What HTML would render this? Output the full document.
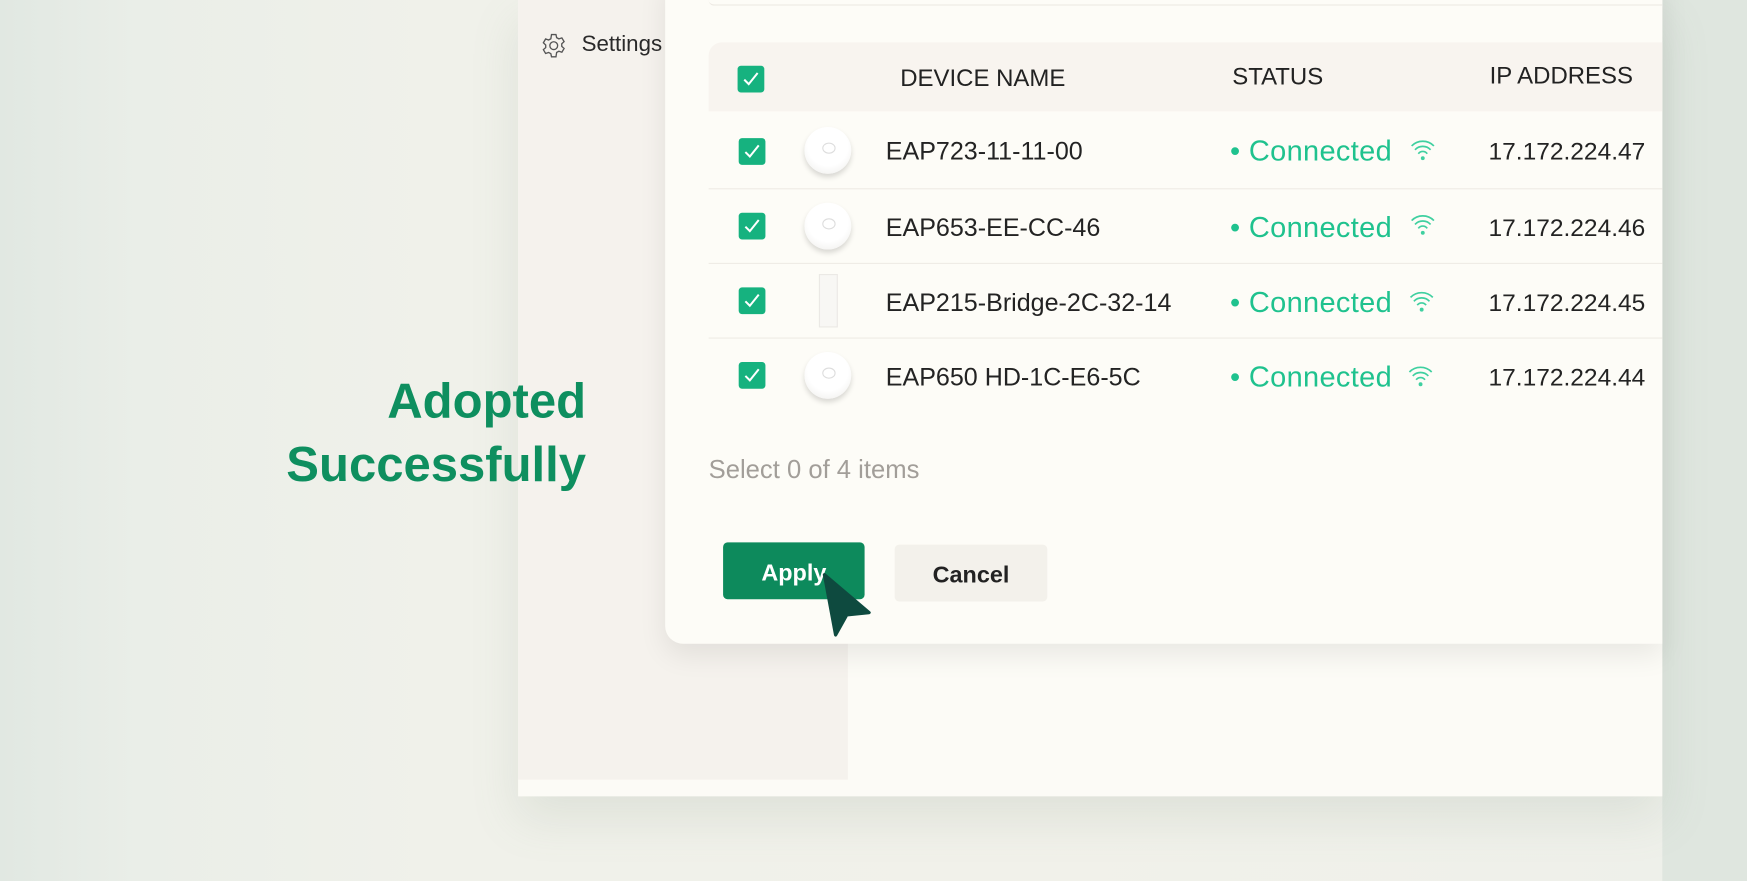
<!DOCTYPE html>
<html><head><meta charset="utf-8"><style>
*{margin:0;padding:0;box-sizing:border-box}
html,body{width:1747px;height:881px;overflow:hidden;background:#e6ebe5}
#s{position:absolute;left:0;top:0;width:1568px;height:791px;transform:scale(1.11416,1.1138);transform-origin:0 0;font-family:"Liberation Sans",sans-serif;
background:linear-gradient(90deg,#e1e8e2 0%,#eaeee8 8%,#f0f1ea 25%,#f1f1ea 60%,#eef0ea 100%);overflow:hidden}
.a{position:absolute}
.cb{position:absolute;width:24px;height:24px;border-radius:3px;background:#16b27f}
.cb svg{position:absolute;left:4px;top:4px}
.row{position:absolute;left:636px;width:856px;height:67px;border-top:1px solid #efebe5}
.ic{position:absolute;left:722px;width:42px;height:42px;border-radius:50%;background:radial-gradient(circle at 50% 40%,#ffffff 55%,#ecebe8 100%);box-shadow:0 3px 5px rgba(0,0,0,.15)}
.ic:after{content:"";position:absolute;left:16px;top:14px;width:10px;height:8px;border:1px solid #ddd;border-radius:50%}
.nm{position:absolute;left:159px;font-size:22.5px;color:#232323;top:22px}
.st{position:absolute;left:468px;font-size:26px;color:#1fc28e;top:19px;letter-spacing:.3px}
.ip{position:absolute;left:700px;font-size:22px;color:#232323;top:22px}
</style></head><body><div id="s">
<div class="a" style="left:1492px;top:0;width:76px;height:791px;background:#dfe6df"></div>
<div class="a" style="left:465px;top:0;width:1027px;height:715px;background:#fcfbf6;box-shadow:0 20px 40px rgba(120,140,120,.15)"></div>
<div class="a" style="left:465px;top:0;width:296px;height:700px;background:#f5f2ed"></div>
<svg class="a" style="left:485px;top:29px" width="24" height="24" viewBox="0 0 24 24" fill="none" stroke="#555" stroke-width="1.2"><circle cx="12" cy="12" r="3.5"/><path d="M10 2h4l.6 2.8 2 1.1 2.7-.9 2 3.4-2.1 1.9v2.3l2.1 1.9-2 3.4-2.7-.9-2 1.1L14 22h-4l-.6-2.8-2-1.1-2.7.9-2-3.4 2.1-1.9v-2.3L2.7 9.4l2-3.4 2.7.9 2-1.1z"/></svg>
<div class="a" style="left:522px;top:29px;font-size:20px;color:#2a2a2a">Settings</div>
<div class="a" style="left:200px;top:332px;width:326px;text-align:right;font-size:44px;line-height:57px;font-weight:bold;color:#0e8f5f">Adopted<br>Successfully</div>
<div class="a" style="left:597px;top:-20px;width:895px;height:598px;background:#fdfcf7;border-radius:0 0 0 16px;box-shadow:0 10px 25px rgba(0,0,0,.08)"></div>
<div class="a" style="left:636px;top:0;width:856px;height:5px;border-bottom:1px solid #ece8e2;border-radius:0 0 0 6px"></div>
<div class="a" style="left:636px;top:38px;width:856px;height:62px;background:#f8f4ef;border-radius:12px 0 0 0"></div>
<div class="cb" style="left:662px;top:59px"><svg width="16" height="16" viewBox="0 0 16 16"><path d="M2 8.5l4 4 8-10" fill="none" stroke="#fff" stroke-width="1.8"/></svg></div>
<div class="a" style="left:808px;top:58px;font-size:21.5px;color:#222">DEVICE NAME</div>
<div class="a" style="left:1106px;top:57px;font-size:21.5px;color:#222">STATUS</div>
<div class="a" style="left:1337px;top:56px;font-size:21.5px;color:#222">IP ADDRESS</div>

<div class="row" style="top:101px;border-top:none"><div class="nm">EAP723-11-11-00</div><div class="st">• Connected</div><div class="ip">17.172.224.47</div></div>
<div class="row" style="top:169px"><div class="nm">EAP653-EE-CC-46</div><div class="st">• Connected</div><div class="ip">17.172.224.46</div></div>
<div class="row" style="top:236px"><div class="nm">EAP215-Bridge-2C-32-14</div><div class="st">• Connected</div><div class="ip">17.172.224.45</div></div>
<div class="row" style="top:303px"><div class="nm">EAP650 HD-1C-E6-5C</div><div class="st">• Connected</div><div class="ip">17.172.224.44</div></div>

<div class="cb" style="left:663px;top:124px"><svg width="16" height="16" viewBox="0 0 16 16"><path d="M2 8.5l4 4 8-10" fill="none" stroke="#fff" stroke-width="1.8"/></svg></div>
<div class="cb" style="left:663px;top:191px"><svg width="16" height="16" viewBox="0 0 16 16"><path d="M2 8.5l4 4 8-10" fill="none" stroke="#fff" stroke-width="1.8"/></svg></div>
<div class="cb" style="left:663px;top:258px"><svg width="16" height="16" viewBox="0 0 16 16"><path d="M2 8.5l4 4 8-10" fill="none" stroke="#fff" stroke-width="1.8"/></svg></div>
<div class="cb" style="left:663px;top:325px"><svg width="16" height="16" viewBox="0 0 16 16"><path d="M2 8.5l4 4 8-10" fill="none" stroke="#fff" stroke-width="1.8"/></svg></div>

<div class="ic" style="top:114px"></div>
<div class="ic" style="top:182px"></div>
<div class="a" style="left:735px;top:246px;width:17px;height:48px;background:#f8f7f4;border:1px solid #ebe9e5"></div>
<div class="ic" style="top:316px"></div>

<svg class="a" style="left:1265px;top:125px" width="24" height="20" viewBox="0 0 24 20" fill="none" stroke="#3fd0a0" stroke-width="1.5"><path d="M2 6a14 14 0 0 1 20 0M5 9.5a9.5 9.5 0 0 1 14 0M8 13a5 5 0 0 1 8 0"/><circle cx="12" cy="17" r="1" fill="#3fd0a0"/></svg>
<svg class="a" style="left:1265px;top:192px" width="24" height="20" viewBox="0 0 24 20" fill="none" stroke="#3fd0a0" stroke-width="1.5"><path d="M2 6a14 14 0 0 1 20 0M5 9.5a9.5 9.5 0 0 1 14 0M8 13a5 5 0 0 1 8 0"/><circle cx="12" cy="17" r="1" fill="#3fd0a0"/></svg>
<svg class="a" style="left:1264px;top:261px" width="24" height="20" viewBox="0 0 24 20" fill="none" stroke="#3fd0a0" stroke-width="1.5"><path d="M2 6a14 14 0 0 1 20 0M5 9.5a9.5 9.5 0 0 1 14 0M8 13a5 5 0 0 1 8 0"/><circle cx="12" cy="17" r="1" fill="#3fd0a0"/></svg>
<svg class="a" style="left:1263px;top:328px" width="24" height="20" viewBox="0 0 24 20" fill="none" stroke="#3fd0a0" stroke-width="1.5"><path d="M2 6a14 14 0 0 1 20 0M5 9.5a9.5 9.5 0 0 1 14 0M8 13a5 5 0 0 1 8 0"/><circle cx="12" cy="17" r="1" fill="#3fd0a0"/></svg>

<div class="a" style="left:636px;top:408px;font-size:23px;color:#a29e99">Select 0 of 4 items</div>
<div class="a" style="left:649px;top:487px;width:127px;height:51px;background:#0d8a5c;border-radius:4px;color:#fff;font-weight:bold;font-size:21px;text-align:center;line-height:56px">Apply</div>
<div class="a" style="left:803px;top:489px;width:137px;height:51px;background:#f3f1eb;border-radius:4px;color:#222;font-weight:bold;font-size:21px;text-align:center;line-height:56px">Cancel</div>
<svg class="a" style="left:736px;top:512px" width="50" height="62" viewBox="0 0 50 62"><path d="M4 4L44 38 24 40 14 58z" fill="#0e4a3f" stroke="#0e4a3f" stroke-width="3" stroke-linejoin="round"/></svg>
</div></body></html>
